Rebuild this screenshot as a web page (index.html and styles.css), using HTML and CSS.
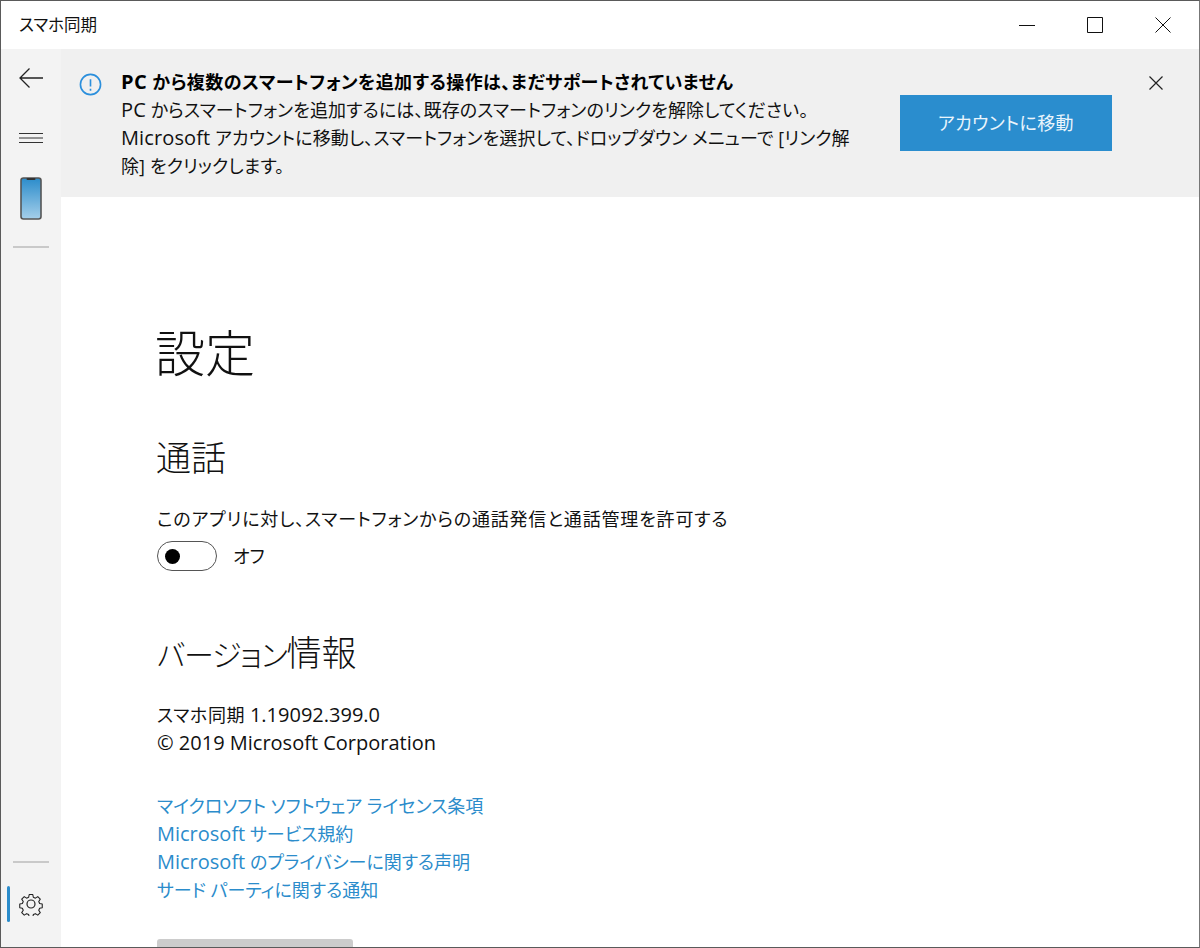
FILE: index.html
```html
<!DOCTYPE html>
<html lang="ja">
<head>
<meta charset="utf-8">
<title>スマホ同期</title>
<link rel="stylesheet" href="styles.css">
</head>
<body>
<div class="window">
  <header class="titlebar">
    <span class="app-title">スマホ同期</span>
    <div class="win-controls">
      <svg class="win-icon" viewBox="0 0 16 16"><path d="M0 8.500h16"/></svg>
      <svg class="win-icon" viewBox="0 0 16 16"><path d="M.5.5h15v15H.5z"/></svg>
      <svg class="win-icon" viewBox="0 0 16 16"><path d="M.5.5l15 15M15.500.5l-15 15"/></svg>
    </div>
  </header>
  <div class="body">
    <nav class="sidebar">
      <div class="side-top">
        <svg class="back" viewBox="0 0 26 22"><path d="M25 11H2M11.500 1.500L2 11l9.500 9.500"/></svg>
        <svg class="menu" viewBox="0 0 24 12"><path d="M0 1.500h24M0 6h24M0 10.500h24"/></svg>
        <svg class="phone" viewBox="0 0 22 43">
          <defs><linearGradient id="screen" x1="0" y1="0" x2="0" y2="1"><stop offset="0" stop-color="#2b8ccb"/><stop offset="1" stop-color="#a5cfea"/></linearGradient></defs>
          <rect x="1" y="1" width="20" height="41" rx="2.500" fill="url(#screen)" stroke="#555" stroke-width="1.600"/>
          <rect x="6.500" y="1" width="9" height="2" rx="1" fill="#333"/>
        </svg>
        <div class="side-rule"></div>
      </div>
      <div class="side-bottom">
        <div class="side-rule"></div>
        <div class="settings-item">
          <span class="indicator"></span>
          <svg class="gear" viewBox="0 0 24 24"><path d="M10 1.500h4l.6 3 2.300 1 2.600-1.700 2.800 2.800-1.700 2.600 1 2.300 2.900.6v4l-2.900.6-1 2.300 1.700 2.600-2.800 2.800-2.600-1.700-2.300 1-.6 2.900h-4l-.6-2.900-2.300-1-2.600 1.700-2.800-2.800 1.700-2.600-1-2.300-2.900-.6v-4l2.900-.6 1-2.300-1.700-2.600 2.800-2.800 2.600 1.700 2.300-1z" transform="translate(1.200 1.200) scale(.9)"/><circle cx="12" cy="12" r="4"/></svg>
        </div>
      </div>
    </nav>
    <main class="main">
      <section class="banner">
        <svg class="info" viewBox="0 0 24 24"><circle cx="12" cy="12" r="10.500"/><path d="M12 6.500v7.500M12 16.500v2"/></svg>
        <div class="banner-text">
          <p class="banner-title"><span class="lt">PC</span> から複数のスマートフォンを追加する操作は、まだサポートされていません</p>
          <p class="track-s"><span class="lt">PC</span> からスマートフォンを追加するには、既存のスマートフォンのリンクを解除してください。</p>
          <p class="track-s"><span class="lt">Microsoft</span> アカウントに移動し、スマートフォンを選択して、ドロップダウン メニューで [リンク解<br>除] をクリックします。</p>
        </div>
        <button class="banner-btn">アカウントに移動</button>
        <svg class="banner-close" viewBox="0 0 14 14"><path d="M.5.500l13 13M13.500.5l-13 13"/></svg>
      </section>
      <section class="content">
        <h1>設定</h1>
        <h2 class="call-h">通話</h2>
        <p class="perm">このアプリに対し、スマートフォンからの通話発信と通話管理を許可する</p>
        <div class="toggle-row">
          <span class="toggle"><span class="knob"></span></span>
          <span>オフ</span>
        </div>
        <h2 class="ver-h"><span class="kana">バージョン</span>情報</h2>
        <p class="version"><span class="app-name">スマホ同期</span> <span class="lt">1.19092.399.0</span></p>
        <p class="lt">© 2019 Microsoft Corporation</p>
        <ul class="links">
          <li><a href="#">マイクロソフト ソフトウェア ライセンス条項</a></li>
          <li><a href="#"><span class="lt">Microsoft</span> サービス規約</a></li>
          <li><a href="#"><span class="lt">Microsoft</span> のプライバシーに関する声明</a></li>
          <li><a href="#">サード パーティに関する通知</a></li>
        </ul>
        <div class="cut-btn"></div>
      </section>
    </main>
  </div>
</div>
</body>
</html>
```

FILE: styles.css
```css
* { box-sizing: border-box; }
html, body { margin: 0; height: 100%; overflow: hidden; }
body {
  font-family: "Open Sans", "Noto Sans CJK JP", sans-serif;
  font-size: 18px;
  line-height: 28px;
  color: #111;
  font-feature-settings: "palt";
  background: #fff;
}
p { margin: 0; }
.lt { font-size: 20px; }
.window {
  height: 948px;
  display: flex;
  flex-direction: column;
  border: 1px solid #5a5a5a;
  border-right-color: #777;
  overflow: hidden;
}
.titlebar {
  height: 48px;
  flex: none;
  display: flex;
  align-items: center;
  justify-content: space-between;
  padding-left: 18px;
}
.app-title { font-size: 16.500px; }
.win-controls { display: flex; align-items: center; gap: 52px; padding-right: 28px; }
.win-icon { width: 16px; height: 16px; fill: none; stroke: #111; stroke-width: 1; }
.body { flex: 1; display: flex; min-height: 0; }
.sidebar {
  width: 60px;
  flex: none;
  background: #f3f3f3;
  display: flex;
  flex-direction: column;
  justify-content: space-between;
}
.side-top { display: flex; flex-direction: column; align-items: center; }
.back { width: 26px; height: 22px; margin-top: 18px; fill: none; stroke: #222; stroke-width: 1.300; }
.menu { width: 24px; height: 12px; margin-top: 43px; fill: none; stroke: #333; stroke-width: 1; }
.phone { width: 22px; height: 43px; margin-top: 33px; }
.side-rule { width: 36px; height: 2px; background: #c9c9c9; }
.side-top .side-rule { margin-top: 26px; }
.side-bottom { display: flex; flex-direction: column; align-items: center; }
.settings-item { width: 100%; height: 40px; margin-top: 23px; margin-bottom: 21px; display: flex; align-items: center; position: relative; padding-left: 18px; }
.indicator { position: absolute; left: 6px; top: 0; width: 3px; height: 36px; border-radius: 2px; background: #2b8ccb; }
.gear { width: 24px; height: 24px; margin-top: -4px; fill: none; stroke: #222; stroke-width: 1.200; stroke-linejoin: round; }
.main { flex: 1; min-width: 0; display: flex; flex-direction: column; }
.banner {
  flex: none;
  height: 148px;
  background: #f0f0f0;
  position: relative;
  display: flex;
  align-items: flex-start;
  padding: 19px 0 0 18px;
}
.info { width: 23px; height: 23px; flex: none; margin-top: 5px; fill: none; stroke: #2b8fdc; stroke-width: 1.700; }
.banner-text { width: 745px; margin-left: 19px; }
.banner-title { font-weight: 700; color: #000; letter-spacing: .45px; }
.track-s { letter-spacing: .12px; }
.banner-btn {
  position: absolute;
  left: 839px;
  top: 46px;
  width: 212px;
  height: 56px;
  border: 0;
  background: #2a8dce;
  color: #eaf5fc;
  font: inherit;
  font-feature-settings: inherit;
  letter-spacing: .4px;
}
.banner-close { position: absolute; left: 1088px; top: 27px; width: 14px; height: 14px; fill: none; stroke: #222; stroke-width: 1.200; }
.content { flex: 1; padding-left: 96px; overflow: hidden; }
h1 { margin: 124px 0 0 -2px; font-size: 50px; line-height: 64px; font-weight: 300; }
h2 { margin: 0; font-size: 35px; line-height: 44px; font-weight: 300; }
.kana { font-size: 30px; letter-spacing: -1.200px; }
.call-h { margin-top: 51px; margin-left: -1px; }
.perm { margin-top: 25px; letter-spacing: .82px; }
.toggle-row { display: flex; align-items: center; gap: 16px; margin-top: 7px; height: 32px; }
.toggle { width: 60px; height: 30px; border: 1.500px solid #555; border-radius: 15px; display: flex; align-items: center; padding-left: 7px; }
.knob { width: 15px; height: 15px; border-radius: 50%; background: #000; }
.ver-h { margin-top: 59px; margin-bottom: 24px; }
.app-name { letter-spacing: .6px; }
.links { list-style: none; margin: 35px 0 0; padding: 0; }
.links a { color: #2b8ccb; text-decoration: none; }
.cut-btn { width: 196px; height: 32px; margin-top: 35px; background: #cccccc; border-radius: 3px; }
```
